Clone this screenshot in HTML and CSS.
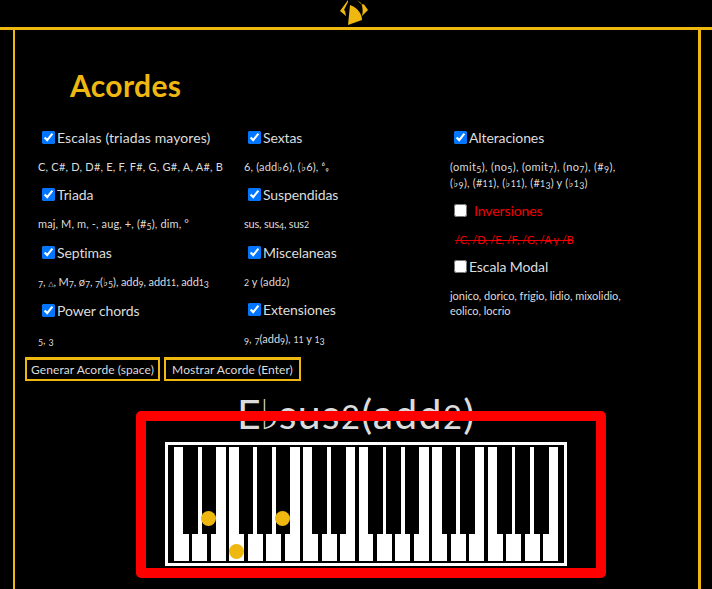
FILE: index.html
```html
<!DOCTYPE html>
<html lang="es">
<head>
<meta charset="utf-8">
<title>Acordes</title>
<link rel="stylesheet" href="styles.css">
</head>
<body>
<header class="top">
  <svg class="logo" viewBox="0 0 30 27" width="30" height="27" fill="#efb810" aria-hidden="true">
    <path d="M11 5L9 25L23 20C23 14 19 8 11 5Z"/>
    <path d="M9 0L1 11L7 16L6 11L5 10L9 2Z"/>
    <path d="M18 0L22 3C24 7 24 12 23 16L29 10L25 4.500L22 4Z"/>
  </svg>
</header>
<main class="panel">
  <h1>Acordes</h1>
  <section class="options">
    <div class="column">
      <label><input type="checkbox" checked><span class="w-escalas">Escalas (triadas mayores)</span></label>
      <p class="p-notes">C, C#, D, D#, E, F, F#, G, G#, A, A#, B</p>
      <label><input type="checkbox" checked><span>Triada</span></label>
      <p class="p-triada">maj, M, m, -, aug, +, (#<b>5</b>), dim, °</p>
      <label><input type="checkbox" checked><span>Septimas</span></label>
      <p class="p-septimas"><b>7</b>, <small>△</small>, M<b>7</b>, ø<b>7</b>, <b>7</b>(♭<b>5</b>), add<b>9</b>, add<i>11</i>, add<i>1</i><b>3</b></p>
      <label><input type="checkbox" checked><span>Power chords</span></label>
      <p><b>5</b>, <b>3</b></p>
    </div>
    <div class="column">
      <label><input type="checkbox" checked><span>Sextas</span></label>
      <p class="p-sextas">6, (add♭6), (♭6), ⁶₉</p>
      <label><input type="checkbox" checked><span>Suspendidas</span></label>
      <p class="p-sus">sus, sus<b>4</b>, sus<i>2</i></p>
      <label><input type="checkbox" checked><span>Miscelaneas</span></label>
      <p class="p-misc"><i>2</i> y (add<i>2</i>)</p>
      <label><input type="checkbox" checked><span>Extensiones</span></label>
      <p class="p-ext"><b>9</b>, <b>7</b>(add<b>9</b>), <i>11</i> y <i>1</i><b>3</b></p>
    </div>
    <div class="column last">
      <label><input type="checkbox" checked><span>Alteraciones</span></label>
      <p class="p-alt">(omit<b>5</b>), (no<b>5</b>), (omit<b>7</b>), (no<b>7</b>), (#<b>9</b>),<br><span class="p-alt-tight">(♭<b>9</b>), (#<i>11</i>), (♭<i>11</i>), (#<i>1</i><b>3</b>) y (♭<i>1</i><b>3</b>)</span></p>
      <label class="off"><input type="checkbox"><span>Inversiones</span></label>
      <p class="off struck">/C, /D, /E, /F, /G, /A y /B</p>
      <label><input type="checkbox"><span>Escala Modal</span></label>
      <p class="p-modal">jonico, dorico, frigio, lidio, mixolidio,<br>eolico, locrio</p>
    </div>
  </section>
  <div class="actions">
    <button class="generate">Generar Acorde (space)</button>
    <button class="show">Mostrar Acorde (Enter)</button>
  </div>
  <section class="result">
    <h2>E<span class="flat">♭</span>sus<i>2</i>(add<i>2</i>)</h2>
    <div class="piano">
      <div class="key sharp"></div><div class="key sharp on-sharp"></div><div class="key"></div>
      <div class="key sharp on"></div><div class="key sharp"></div><div class="key sharp on-sharp"></div><div class="key"></div>
      <div class="key sharp"></div><div class="key sharp"></div><div class="key"></div>
      <div class="key sharp"></div><div class="key sharp"></div><div class="key sharp"></div><div class="key"></div>
      <div class="key sharp"></div><div class="key sharp"></div><div class="key"></div>
      <div class="key sharp"></div><div class="key sharp"></div><div class="key sharp"></div><div class="key"></div>
    </div>
    <div class="highlight"></div>
  </section>
</main>
</body>
</html>
```

FILE: styles.css
```css
* { box-sizing: border-box; }
body {
  margin: 0;
  height: 589px;
  overflow: hidden;
  background: #000;
  color: #dcdcdc;
  font-family: Lato, "DejaVu Sans", sans-serif;
}
.top {
  height: 30px;
  border-bottom: 3px solid #efb810;
  display: flex;
  padding-left: 339px;
}
.logo { display: block; }
.panel {
  margin: 0 11px 0 13px;
  height: 559px;
  border: solid #efb810;
  border-width: 0 3px 0 2px;
}
h1 {
  margin: 0;
  padding: 35px 0 0 55px;
  height: 98px;
  font-size: 30px;
  line-height: 40px;
  font-weight: 700;
  letter-spacing: 0.350px;
  color: #efb810;
}
.options {
  display: grid;
  grid-template-columns: 206px 206px 200px;
  padding-left: 23px;
  height: 229px;
}
label {
  display: flex;
  align-items: center;
  height: 22px;
  font-size: 14px;
  letter-spacing: -0.100px;
  white-space: nowrap;
}
label span { padding-bottom: 3px; }
.w-escalas { letter-spacing: 0.100px; }
input { margin: 0 2px 3px 4px; width: 13px; height: 13px; }
p {
  margin: 9px 0 11.300px;
  font-size: 11px;
  line-height: 15px;
  white-space: nowrap;
}
.last p { margin-bottom: 10.600px; }
/* old-style figures: x-height digits, some of them descending */
b, i { font-style: normal; font-weight: inherit; font-size: 0.8em; line-height: 1; }
b { vertical-align: -0.2em; }
small { font-size: 7px; line-height: 1; }
.p-notes { letter-spacing: 0.220px; }
.p-triada { letter-spacing: 0.130px; }
.p-septimas { letter-spacing: -0.100px; }
.p-sextas { letter-spacing: 0.150px; }
.p-alt { letter-spacing: 0.350px; }
.p-alt-tight { letter-spacing: 0.220px; }
.p-sus { letter-spacing: -0.200px; }
.p-misc { letter-spacing: 0.100px; }
.p-modal { letter-spacing: -0.030px; }
.off { color: #f00000; }
label.off span { padding-left: 5px; }
.struck { padding-left: 5px; letter-spacing: -0.070px; text-decoration: line-through; }
.actions { display: flex; gap: 4px; padding-left: 10px; }
button {
  height: 24px;
  padding: 0;
  border: solid #efb810;
  border-width: 3px 2px 2px;
  background: #000;
  color: #dcdcdc;
  font: 12px Lato, sans-serif;
  letter-spacing: 0.060px;
  white-space: nowrap;
}
.generate { width: 135px; }
.show { width: 137px; }
.result { position: relative; }
h2 {
  margin: 0;
  padding: 9px 0 0 222px;
  height: 61px;
  font-size: 41px;
  line-height: 48px;
  font-weight: 400;
  letter-spacing: 1.300px;
  white-space: nowrap;
}
.flat { margin: 0 -2px; }
.piano {
  display: flex;
  gap: 3.500px;
  width: 402px;
  height: 124px;
  margin-left: 150px;
  padding: 2px 6px;
  border: 3px solid #fff;
}
.key { position: relative; flex: 1; height: 114px; background: #fff; }
.sharp::after {
  content: "";
  position: absolute;
  z-index: 1;
  left: 9.300px;
  top: 0;
  width: 14.700px;
  height: 87px;
  background: #000;
}
.on::before, .on-sharp::before {
  content: "";
  position: absolute;
  z-index: 2;
  left: 0;
  top: 97px;
  width: 15px;
  height: 15px;
  border-radius: 50%;
  background: #efb810;
}
.on-sharp::before { left: 9px; top: 64px; }
.highlight {
  position: absolute;
  z-index: 3;
  left: 121px;
  top: 30px;
  width: 470px;
  height: 167px;
  border: 10px solid #f00;
  border-radius: 5px;
}
```
